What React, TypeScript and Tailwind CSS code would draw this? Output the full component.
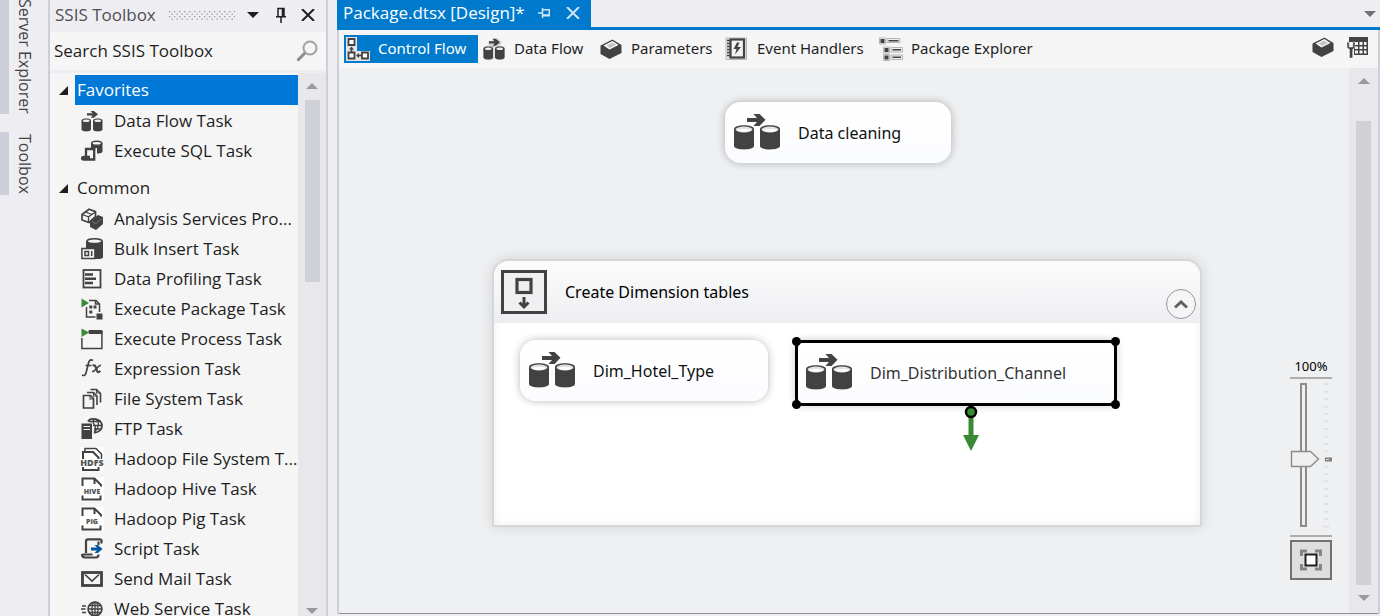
import React from "react";

const INK = "#424242";

function DataFlowIcon({ className = "" }: { className?: string }) {
  return (
    <svg viewBox="0 0 46 36" className={className} aria-hidden="true">
      {[0, 26].map((x) => (
        <g key={x} transform={`translate(${x} 0)`}>
          <path d="M0 15c0-5 20-5 20 0v17c0 4.500-20 4.500-20 0z" fill={INK} />
          <ellipse cx="10" cy="15.500" rx="8.500" ry="2.900" fill="#e0e3e4" />
          <path d="M3 16.200c2-1.500 12-1.500 14 0-2 2-12 2-14 0z" fill="#fff" />
        </g>
      ))}
      <path d="M13 4h10L19.500 0h6l6 5.800-6 6.200h-6L23 8H13z" fill={INK} />
    </svg>
  );
}

function SmallDataFlowIcon({ className = "", halo = false }: { className?: string; halo?: boolean }) {
  return (
    <svg viewBox="0 0 24 24" className={className} aria-hidden="true">
      {halo && (
        <path
          d="M7 4.500h4V1.500h4l4 4-3 4h4.500l2 1.500v10l-2 1.500h-5l-3-2-3 2h-6L1.500 21V11l2-1.500H12L7 7.500z"
          fill="#ddd"
          stroke="#c4c4c4"
          strokeLinejoin="round"
        />
      )}
      {[1.5, 13].map((x) => (
        <g key={x} transform={`translate(${x} 0)`}>
          <path d="M0 11.500c0-2.600 9.500-2.600 9.500 0v9c0 2.600-9.500 2.600-9.500 0z" fill={INK} />
          <ellipse cx="4.750" cy="11.800" rx="3.300" ry="1.200" fill="#eee" />
        </g>
      ))}
      <path d="M7 4.200h5.500L10.700 2h3.200L18 5.300l-4.100 3.500h-3.200l1.800-2.300H7z" fill={INK} />
    </svg>
  );
}

function BoxIcon({ className = "" }: { className?: string }) {
  return (
    <svg viewBox="0 0 24 24" className={className} aria-hidden="true">
      <path d="M1.500 8.500 13.500 2.500 22.500 8v8L10.500 22 1.500 17z" fill={INK} />
      <path d="M4.500 8.500 13.500 4 19.500 8 10.500 12.500z" fill="#fafafa" />
      <path d="M7.500 8.600 13.500 5.600l3.500 2.300-6.200 3z" fill="#c4c4c4" />
    </svg>
  );
}

function SmallIcon({ children }: { children: React.ReactNode }) {
  return (
    <svg viewBox="0 0 22 22" className="size-[22px] shrink-0" fill="none" stroke={INK} strokeWidth="1.7" aria-hidden="true">
      {children}
    </svg>
  );
}

const sqlIcon = (
  <SmallIcon>
    <path d="M10 3v5h6v5.500c3 0 5.500-.5 5.500-2V3z" fill={INK} stroke="none" />
    <ellipse cx="15.700" cy="3.200" rx="5" ry="2" fill="#f5f5f5" strokeWidth="1.500" />
    <path d="M5 17.500V9h9.500M13.200 9v10.500H2.500c-2 0-1.800-2.500 0-2.500H9" strokeWidth="2.300" />
  </SmallIcon>
);
const analysisIcon = (
  <SmallIcon>
    <path d="M1 6.500 8 1.200l6.500 2.500v5L8 14.500 1 12z" />
    <path d="m1 6.500 6.500 2.300L14.500 4M7.500 8.800v5.500M4.500 4l6.500 2.500" strokeWidth="1.300" />
    <path d="m9 13.500 8-6.500 5 2v7L15 22l-6-3z" fill={INK} stroke="none" />
    <path d="m10.500 13.500 4.500 2 6-5" stroke="#8a8a8a" strokeWidth=".7" />
  </SmallIcon>
);
const bulkIcon = (
  <SmallIcon>
    <path d="M5 3v7h9v11h4c2.500 0 4-1 4-2V3z" fill={INK} stroke="none" />
    <ellipse cx="13.500" cy="3.200" rx="7.500" ry="2.400" fill="#f5f5f5" strokeWidth="1.500" />
    <rect x=".9" y="10.500" width="13" height="10" fill="#f5f5f5" strokeWidth="1.500" />
    <rect x="4" y="13.500" width="3.500" height="4" strokeWidth="1.500" />
    <path d="M10.700 13v5" strokeWidth="1.500" />
  </SmallIcon>
);
const profilingIcon = (
  <SmallIcon>
    <rect x="2.500" y="2" width="17" height="17.500" strokeWidth="1.800" />
    <path d="M4 6.500h8M4 10.800h11M4 15h8" strokeWidth="2.400" />
  </SmallIcon>
);
const packageIcon = (
  <SmallIcon>
    <path d="M5.500 9v10h9M8 2.500h7l3.500 3.500v8M14.500 2.500V6h4" strokeWidth="1.500" />
    <path d="M8.300 7.500h3v3h-3zM12.500 7.500h3v3h-3zM8.300 12.500h3v3h-3z" fill={INK} stroke="none" />
    <rect x="15.500" y="15.500" width="6" height="6" fill={INK} stroke="none" />
    <path d="M.5.5 8 5 .5 9.500z" fill="#388a34" stroke="none" />
  </SmallIcon>
);
const processIcon = (
  <SmallIcon>
    <path d="M8 2.500h13v3H8z" fill={INK} stroke={INK} strokeWidth="1" />
    <path d="M.9 10v10.500h20V3" strokeWidth="1.500" />
    <path d="M.5.5 8 4.500.5 9z" fill="#388a34" stroke="none" />
  </SmallIcon>
);
const expressionIcon = (
  <SmallIcon>
    <path d="M12 2.500c-3.500-2-4.500 2-5 4.500L5 15c-.6 2.500-2 3-4 2M4.500 7.500h6" strokeWidth="1.700" />
    <path d="M11.500 7.500c3-1 3 1 4 4s1.500 3.500 4 1.500" strokeWidth="2.200" />
    <path d="M20 7.200c-3-.5-5.500 6.800-9 6.300" strokeWidth="1.500" />
  </SmallIcon>
);
const fileIcon = (
  <SmallIcon>
    <path d="M2.500 7.500h7l3 3v9.500h-10z" />
    <path d="M6 4.500h6.500l3.500 3.500v9M9.500 1.500h6l4 4v9" strokeWidth="1.600" />
    <path d="M9 7.500v3.500h3.500M12.500 4.500V8H16M15.500 1.500V5h4" strokeWidth="1.100" />
  </SmallIcon>
);
const ftpIcon = (
  <SmallIcon>
    <path d="M.5 5.500H11V21H.5z" fill={INK} stroke="none" />
    <path d="M2.500 8.500H9M2.500 11.500H9" stroke="#f5f5f5" strokeWidth="1.200" />
    <path d="M7 3.500C9-.500 20 0 21 7c.5 4.500-4 8-8 7.500" strokeWidth="1.800" />
    <path d="M13.500 1c-2 2-2 3 0 6s1 5-.5 7.500M14.500 1c5 4 3 9-1 13M8 3.500h12M12 7.500h9M13 11h7.500" strokeWidth="1.300" />
  </SmallIcon>
);

function HadoopIcon({ label, double = false }: { label: string; double?: boolean }) {
  return (
    <svg viewBox="0 0 24 24" className="-mx-px size-6 shrink-0" aria-hidden="true">
      <path d="M0 0h24v24H0z" fill="#fff" />
      <g fill="none" stroke={INK} strokeWidth="2">
        {double ? (
          <>
            <path d="M3 12V5h10l5.500 5.500V12" />
            <path d="M5 4V1.500h11L21.500 7v5" strokeWidth="1.500" />
          </>
        ) : (
          <path d="M2.500 9V1.500h12L21 8v1.500M14.500 1.500V7" />
        )}
        <path d={double ? "M3 20v3h15.500v-3" : "M2.500 18.500v4h18v-4"} />
      </g>
      <text x="12" y={double ? 19 : 16.5} textAnchor="middle" fontFamily="Open Sans, sans-serif" fontWeight="800" fontSize={double ? 9 : 7} fill="#555">
        {label}
      </text>
    </svg>
  );
}

const scriptIcon = (
  <SmallIcon>
    <path d="M5 15V3.500C5 1.500 6 1.300 7 1.300h12c2 0 2 2.500 1 4M17.500 3.500V7M1.500 16.500h10M1 16c0 2 1 3.500 3 3.500h11c2 0 2.500-1 2.500-3" strokeWidth="2.200" />
    <path d="M10 9.500h6L13.500 7h3.300l4.700 4-4.700 4h-3.300l2.500-2.500h-6z" fill="#00539c" stroke="none" />
  </SmallIcon>
);
const mailIcon = (
  <SmallIcon>
    <rect x="1.500" y="4.500" width="19" height="13" strokeWidth="2.800" />
    <path d="m4 6.500 7 6.500 7-6.500" strokeWidth="1.700" />
  </SmallIcon>
);
const webIcon = (
  <SmallIcon>
    <circle cx="14" cy="11" r="6.900" strokeWidth="1.700" />
    <ellipse cx="14" cy="11" rx="3" ry="6.900" strokeWidth="1.300" />
    <path d="M14 4v14M7 11h14M8 7.500h12M8 14.500h12" strokeWidth="1.300" />
    <path d="M1 8h4M0 11h4.500M1 14.500h4" strokeWidth="1.600" />
  </SmallIcon>
);

type Task = { name: string; icon: React.ReactNode };
const groups: { name: string; selected?: boolean; tasks: Task[] }[] = [
  {
    name: "Favorites",
    selected: true,
    tasks: [
      { name: "Data Flow Task", icon: <SmallDataFlowIcon className="-mx-px size-6 shrink-0" /> },
      { name: "Execute SQL Task", icon: sqlIcon },
    ],
  },
  {
    name: "Common",
    tasks: [
      { name: "Analysis Services Pro...", icon: analysisIcon },
      { name: "Bulk Insert Task", icon: bulkIcon },
      { name: "Data Profiling Task", icon: profilingIcon },
      { name: "Execute Package Task", icon: packageIcon },
      { name: "Execute Process Task", icon: processIcon },
      { name: "Expression Task", icon: expressionIcon },
      { name: "File System Task", icon: fileIcon },
      { name: "FTP Task", icon: ftpIcon },
      { name: "Hadoop File System T...", icon: <HadoopIcon label="HDFS" double /> },
      { name: "Hadoop Hive Task", icon: <HadoopIcon label="HIVE" /> },
      { name: "Hadoop Pig Task", icon: <HadoopIcon label="PIG" /> },
      { name: "Script Task", icon: scriptIcon },
      { name: "Send Mail Task", icon: mailIcon },
      { name: "Web Service Task", icon: webIcon },
    ],
  },
];

function Arrow({ up = false, className = "" }: { up?: boolean; className?: string }) {
  return (
    <svg viewBox="0 0 12 6" className={`h-1.5 w-3 ${className}`} aria-hidden="true">
      <path d={up ? "M0 6 6 0l6 6z" : "M0 0h12L6 6z"} fill="currentColor" />
    </svg>
  );
}

function SideTabs() {
  return (
    <nav className="flex w-12 shrink-0 flex-col gap-[18px] text-[16px] leading-6 text-[#444]">
      <button className="flex h-[114px] w-full items-end overflow-hidden border-l-9 border-[#ccceda] pl-1">
        <span className="whitespace-nowrap [writing-mode:vertical-rl]">Server Explorer</span>
      </button>
      <button className="flex h-[63px] w-full items-center border-l-9 border-[#ccceda] pl-1">
        <span className="whitespace-nowrap [writing-mode:vertical-rl]">Toolbox</span>
      </button>
    </nav>
  );
}

function Toolbox() {
  return (
    <aside className="flex w-[280px] shrink-0 flex-col border-x-2 border-[#ccceda] bg-[#f5f5f5]">
      <header className="flex h-8 shrink-0 items-center bg-[#eeeef2] pr-[11px] pb-0.5 pl-[5px]">
        <h2 className="w-[104px] text-[17px] whitespace-nowrap text-[#4f4f55]">SSIS Toolbox</h2>
        <svg className="ml-2.5 h-[9px] min-w-0 flex-1" aria-hidden="true">
          <defs>
            <pattern id="grip" width="5" height="5" patternUnits="userSpaceOnUse">
              <path d="M0 0h1.300v1.300H0zM2.500 2.500h1.300v1.300H2.500z" fill="#999" />
            </pattern>
          </defs>
          <rect width="100%" height="9" fill="url(#grip)" />
        </svg>
        <button aria-label="Window position" className="ml-3 text-[#1e1e1e]">
          <Arrow />
        </button>
        <button aria-label="Auto hide" className="ml-4">
          <svg viewBox="0 0 12 16" className="h-4 w-3" fill="none" stroke="#1e1e1e" aria-hidden="true">
            <path d="M3 9V1.500h6V9M1 9.800h10M6 10v6" strokeWidth="1.500" />
            <path d="M7.800 1v9" strokeWidth="2.200" />
          </svg>
        </button>
        <button aria-label="Close" className="ml-3.5">
          <svg viewBox="0 0 14 12" className="h-3 w-3.5" stroke="#1e1e1e" strokeWidth="2" aria-hidden="true">
            <path d="m1 0 12 12M13 0 1 12" />
          </svg>
        </button>
      </header>
      <div className="flex h-[41px] shrink-0 items-center border-b-3 border-[#eeeef2] pr-2 pl-1">
        <input
          aria-label="Search SSIS Toolbox"
          placeholder="Search SSIS Toolbox"
          className="min-w-0 flex-1 bg-transparent text-[17px] outline-none placeholder:text-[#1e1e1e]"
        />
        <button aria-label="Search">
          <svg viewBox="0 0 22 22" className="size-[22px]" fill="none" aria-hidden="true">
            <circle cx="14" cy="8" r="6.500" stroke="#a0a0a0" strokeWidth="2" />
            <path d="m9 13-7.500 7.500" stroke="#8c8c8c" strokeWidth="3" />
          </svg>
        </button>
      </div>
      <div className="flex min-h-0 flex-1">
        <div className="flex min-w-0 flex-1 flex-col gap-2 overflow-hidden pt-0.5 text-[17px] leading-[30px] text-[#1e1e1e]">
          {groups.map((g) => (
            <section key={g.name} className="shrink-0">
              <div className="flex items-center pl-[9px]">
                <svg viewBox="0 0 9 9" className="mr-[7px] size-[9px]" aria-hidden="true">
                  <path d="M9 0v9H0z" fill="#1e1e1e" />
                </svg>
                <h3 className={`flex-1 pl-0.5 ${g.selected ? "bg-[#0078d7] text-white" : ""}`}>{g.name}</h3>
              </div>
              <ul>
                {g.tasks.map((t) => (
                  <li key={t.name}>
                    <button className="flex h-[30px] w-full items-center gap-[11px] pt-px pl-[31px] text-left whitespace-nowrap">
                      {t.icon}
                      {t.name}
                    </button>
                  </li>
                ))}
              </ul>
            </section>
          ))}
        </div>
        <div className="flex w-[28px] shrink-0 flex-col items-center bg-[#e8e8ec] pt-2.5 pb-0.5 text-[#999]">
          <Arrow up />
          <div className="mt-[11px] h-[182px] w-[15px] bg-[#d0d1d7]" />
          <Arrow className="mt-auto" />
        </div>
      </div>
    </aside>
  );
}

const controlFlowIcon = (
  <svg viewBox="0 0 24 24" className="size-6 shrink-0" aria-hidden="true">
    <path d="M0 0h11v14h13v10H0z" fill="#e4e4e4" />
    <g fill="#fff" stroke={INK} strokeWidth="1.800">
      <path d="M2.500 2h6v6h-6zM2.500 15.500h6v6h-6zM16 15.500h6v6h-6z" />
    </g>
    <path d="M5.500 9.500 8 12.500H6.300V15H4.700v-2.500H3zM10 18.500l3-2.500v1.700h2.500v1.600H13V21z" fill={INK} />
  </svg>
);
const eventIcon = (
  <svg viewBox="0 0 24 24" className="size-6 shrink-0" fill="none" aria-hidden="true">
    <path d="M1 1v21.500h20.500V1z" fill="#e6e6e6" stroke="#b5b5b5" />
    <rect x="5.500" y="2.500" width="13.500" height="18" fill="#f2f2f2" stroke={INK} strokeWidth="2.200" />
    <path d="M2 3.500h3M2 6.500h3M2 9.500h3M2 12.500h3M2 15.500h3M2 18.500h3" stroke={INK} strokeWidth="1.300" />
    <path d="m12 5.500-3.500 6.500h3L10 17.500l6-7.500h-3.500l2-4.500z" fill={INK} />
  </svg>
);
const explorerIcon = (
  <svg viewBox="0 0 24 24" className="size-6 shrink-0" aria-hidden="true">
    <path d="M.5 1h6v6h-6zM8 1.500h13v4H8zM4.500 10h6v6h-6zM12 10.500h11.500v4.500H12zM4.500 17.500h6v6h-6zM12 18h11.500v4.500H12z" fill="#eee" stroke="#b5b5b5" />
    <path d="M1.500 2h4v4h-4zM5.500 11h4v4h-4zM5.500 18.500h4v4h-4zM9.500 3h10v1.500h-10zM13.500 12h8.500v1.500h-8.500zM13.500 19.500h8.500V21h-8.500z" fill={INK} />
  </svg>
);

function DesignerTabs() {
  const base = "flex h-7 items-center gap-2 pl-0.5 whitespace-nowrap";
  const label = "pb-0.5";
  return (
    <div role="tablist" className="flex h-[38px] shrink-0 items-center bg-[#f5f5f5] pr-[9px] pl-[5px] font-[Noto_Sans,sans-serif] text-[15px] text-[#1e1e1e]">
      <button role="tab" aria-selected="true" className={`${base} mr-0.5 w-[134px] bg-[#007acc] text-white`}>
        {controlFlowIcon}
        <span className={label}>Control Flow</span>
      </button>
      <button role="tab" className={`${base} w-[117px]`}>
        <SmallDataFlowIcon halo className="size-6 shrink-0" />
        <span className={label}>Data Flow</span>
      </button>
      <button role="tab" className={`${base} w-[126px]`}>
        <BoxIcon className="size-6 shrink-0" />
        <span className={label}>Parameters</span>
      </button>
      <button role="tab" className={`${base} w-[154px]`}>
        {eventIcon}
        <span className={label}>Event Handlers</span>
      </button>
      <button role="tab" className={base}>
        {explorerIcon}
        <span className={label}>Package Explorer</span>
      </button>
      <button aria-label="Parameters" className="mr-3 mb-1 ml-auto">
        <BoxIcon className="size-6" />
      </button>
      <button aria-label="Properties" className="mb-1">
        <svg viewBox="0 0 22 22" className="size-[22px]" aria-hidden="true">
          <path d="M2 1h19v18H7V6H2z" fill={INK} />
          <path d="M8 6h3v3H8zM12.500 6h3v3h-3zM17 6h2.500v3H17zM8 10.500h3V13H8zM12.500 10.500h3V13h-3zM17 10.500h2.500V13H17zM8 14.500h3v3H8zM12.500 14.500h3v3h-3zM17 14.500h2.500v3H17z" fill="#f5f5f5" />
          <path d="M0 6v5.500l2.500 2V22h3.200v-8.500L8 11.500V6H5.800v5H2.200V6z" fill={INK} stroke="#f5f5f5" strokeWidth=".5" />
        </svg>
      </button>
    </div>
  );
}

function TaskNode({ name, className, selected = false }: { name: string; className: string; selected?: boolean }) {
  const frame = selected
    ? "h-[66px] rounded-[7px] border-3 border-black pl-2 text-[#333] shadow-[0_0_8px_rgba(0,0,0,0.2)]"
    : "h-[61px] rounded-2xl pl-[9px] shadow-[0_0_8px_rgba(0,0,0,0.28)]";
  return (
    <div className={`absolute flex items-center gap-[18px] bg-linear-to-b from-white to-[#fbfcfe] whitespace-nowrap ${frame} ${className}`}>
      <DataFlowIcon className="mb-0.5 h-9 w-[46px] shrink-0" />
      {name}
      {selected && (
        <>
          <i className="absolute -top-1.5 -left-1.5 size-[9px] rounded-full bg-black" />
          <i className="absolute -top-1.5 -right-1.5 size-[9px] rounded-full bg-black" />
          <i className="absolute -bottom-1.5 -left-1.5 size-[9px] rounded-full bg-black" />
          <i className="absolute -right-1.5 -bottom-1.5 size-[9px] rounded-full bg-black" />
        </>
      )}
    </div>
  );
}

function ZoomControl() {
  return (
    <div className="absolute top-[289px] right-[17px] flex w-[42px] flex-col items-center">
      <label htmlFor="zoom" className="text-[13px] leading-[18px] text-black">100%</label>
      <div className="relative mt-0.5 h-[160px] w-full border-y-2 border-[#adadad]">
        <svg viewBox="0 0 42 156" className="h-[156px] w-[42px]" fill="none" aria-hidden="true">
          <path d="M11 5h5v142h-5z" fill="#f0f0f0" stroke="#8c8c8c" strokeWidth="2" />
          {Array.from({ length: 20 }, (_, i) => (
            <path key={i} d={`M${i % 19 === 0 ? 33 : 34} ${5 + i * 7.5}h${i % 19 === 0 ? 6 : 4}`} stroke="#e0e1e3" strokeWidth="2" />
          ))}
          <path d="M1.500 72.500h19l8 7.500-8 7.500h-19z" fill="#efefef" stroke="#8c8c8c" strokeWidth="1.400" />
          <path d="M35 78.500h7v4h-7z" fill="#808080" />
          <path d="M36 80.500h3" stroke="#ddd" />
        </svg>
        <input id="zoom" type="range" min={0} max={200} defaultValue={100} className="absolute inset-0 size-full opacity-0 [direction:rtl] [writing-mode:vertical-lr]" />
      </div>
      <button aria-label="Zoom to fit" className="mt-[3px] flex h-10 w-full items-center justify-center border-2 border-[#717171] bg-[#dedede]">
        <svg viewBox="0 0 24 22" className="h-[22px] w-6" fill="none" aria-hidden="true">
          <path d="M2.500 7V2H8M16 2h5.500v5M21.500 15v5H16M8 20H2.500v-5" stroke="#858585" strokeWidth="3" />
          <rect x="6.500" y="5.500" width="11" height="11" fill="#fff" stroke="#1e1e1e" strokeWidth="2" />
        </svg>
      </button>
    </div>
  );
}

function Canvas() {
  return (
    <div className="relative min-w-0 flex-1 overflow-hidden bg-[#eff0f2] font-[Noto_Sans,sans-serif] text-[16px] text-[#111]">
      <TaskNode name="Data cleaning" className="top-[34px] left-[386px] w-[226px]" />
      <section className="absolute top-[191px] left-[153px] h-[268px] w-[710px] rounded-t-2xl border-2 border-[#d6d7d9] bg-white shadow-[0_0_14px_rgba(0,0,0,0.12),inset_0_0_8px_rgba(0,0,0,0.08)]">
        <header className="flex h-[62px] items-center rounded-t-2xl bg-linear-to-b from-[#fcfcfc] to-[#edeef1] pr-1 pl-[7px]">
          <svg viewBox="0 0 46 44" className="h-11 w-[46px] shrink-0" fill="none" stroke={INK} aria-hidden="true">
            <rect x="1.500" y="1.500" width="43" height="41" fill="#f0eff1" strokeWidth="3" />
            <rect x="16" y="9.500" width="14" height="13" strokeWidth="3.200" />
            <path d="M23 27v9M18.500 32.500 23 37l4.500-4.500" strokeWidth="3" />
          </svg>
          <h3 className="ml-[18px] text-black">Create Dimension tables</h3>
          <button aria-label="Collapse" className="mt-6 ml-auto flex size-[30px] items-center justify-center rounded-full border border-[#999] bg-[#f5f5f7]">
            <svg viewBox="0 0 14 9" className="h-[9px] w-3.5" fill="none" aria-hidden="true">
              <path d="m1 7.500 6-5.500 6 5.500" stroke="#606060" strokeWidth="3" />
            </svg>
          </button>
        </header>
        <TaskNode name="Dim_Hotel_Type" className="top-[79px] left-[26px] w-[248px]" />
        <TaskNode name="Dim_Distribution_Channel" selected className="top-[79px] left-[301px] w-[322px]" />
        <svg viewBox="0 0 16 48" className="absolute top-[143px] left-[469px] h-12 w-4" aria-hidden="true">
          <path d="M5.500 8h5v23H16L8 47 0 31h5.500z" fill="#388a34" />
          <circle cx="8" cy="8" r="5" fill="#388a34" stroke="#000" strokeWidth="2.400" />
        </svg>
      </section>
      <ZoomControl />
    </div>
  );
}

function Designer() {
  return (
    <main className="ml-[9px] flex min-w-0 flex-1 flex-col">
      <div className="flex h-[30px] shrink-0 items-center justify-between border-b-3 border-[#007acc] pr-1">
        <div className="flex h-full items-center bg-[#007acc] pr-[11px] pb-0.5 pl-1.5 text-[17px] whitespace-nowrap text-white">
          <span className="w-[180px]">Package.dtsx [Design]*</span>
          <button aria-label="Pin tab" className="ml-[15px]">
            <svg viewBox="0 0 12 10" className="h-2.5 w-3" fill="none" stroke="#d0e6f5" strokeWidth="1.500" aria-hidden="true">
              <path d="M0 5h4M4.500 0v10M5 1.800h6.300v6H5M5 7h6" />
            </svg>
          </button>
          <button aria-label="Close tab" className="ml-4">
            <svg viewBox="0 0 14 12" className="h-3 w-3.5" stroke="#d0e6f5" strokeWidth="2" aria-hidden="true">
              <path d="m1 0 12 12M13 0 1 12" />
            </svg>
          </button>
        </div>
        <button aria-label="Open documents" className="text-[#717171]">
          <Arrow />
        </button>
      </div>
      <div className="flex min-h-0 flex-1 flex-col border-x-2 border-[#ccceda]">
        <DesignerTabs />
        <div className="flex min-h-0 flex-1 border-b border-[#8e8e99]">
          <Canvas />
          <div className="flex w-[29px] shrink-0 flex-col items-center bg-[#e8e8ec] pt-2.5 pb-3 text-[#999]">
            <Arrow up />
            <div className="mt-[37px] mb-2.5 w-[15px] flex-1 bg-[#d0d1d7]" />
            <Arrow />
          </div>
        </div>
      </div>
      <div className="h-0.5 shrink-0" />
    </main>
  );
}

export default function App() {
  return (
    <div className="flex h-screen overflow-hidden bg-[#eeeef2] font-[Open_Sans,sans-serif]">
      <SideTabs />
      <Toolbox />
      <Designer />
    </div>
  );
}
